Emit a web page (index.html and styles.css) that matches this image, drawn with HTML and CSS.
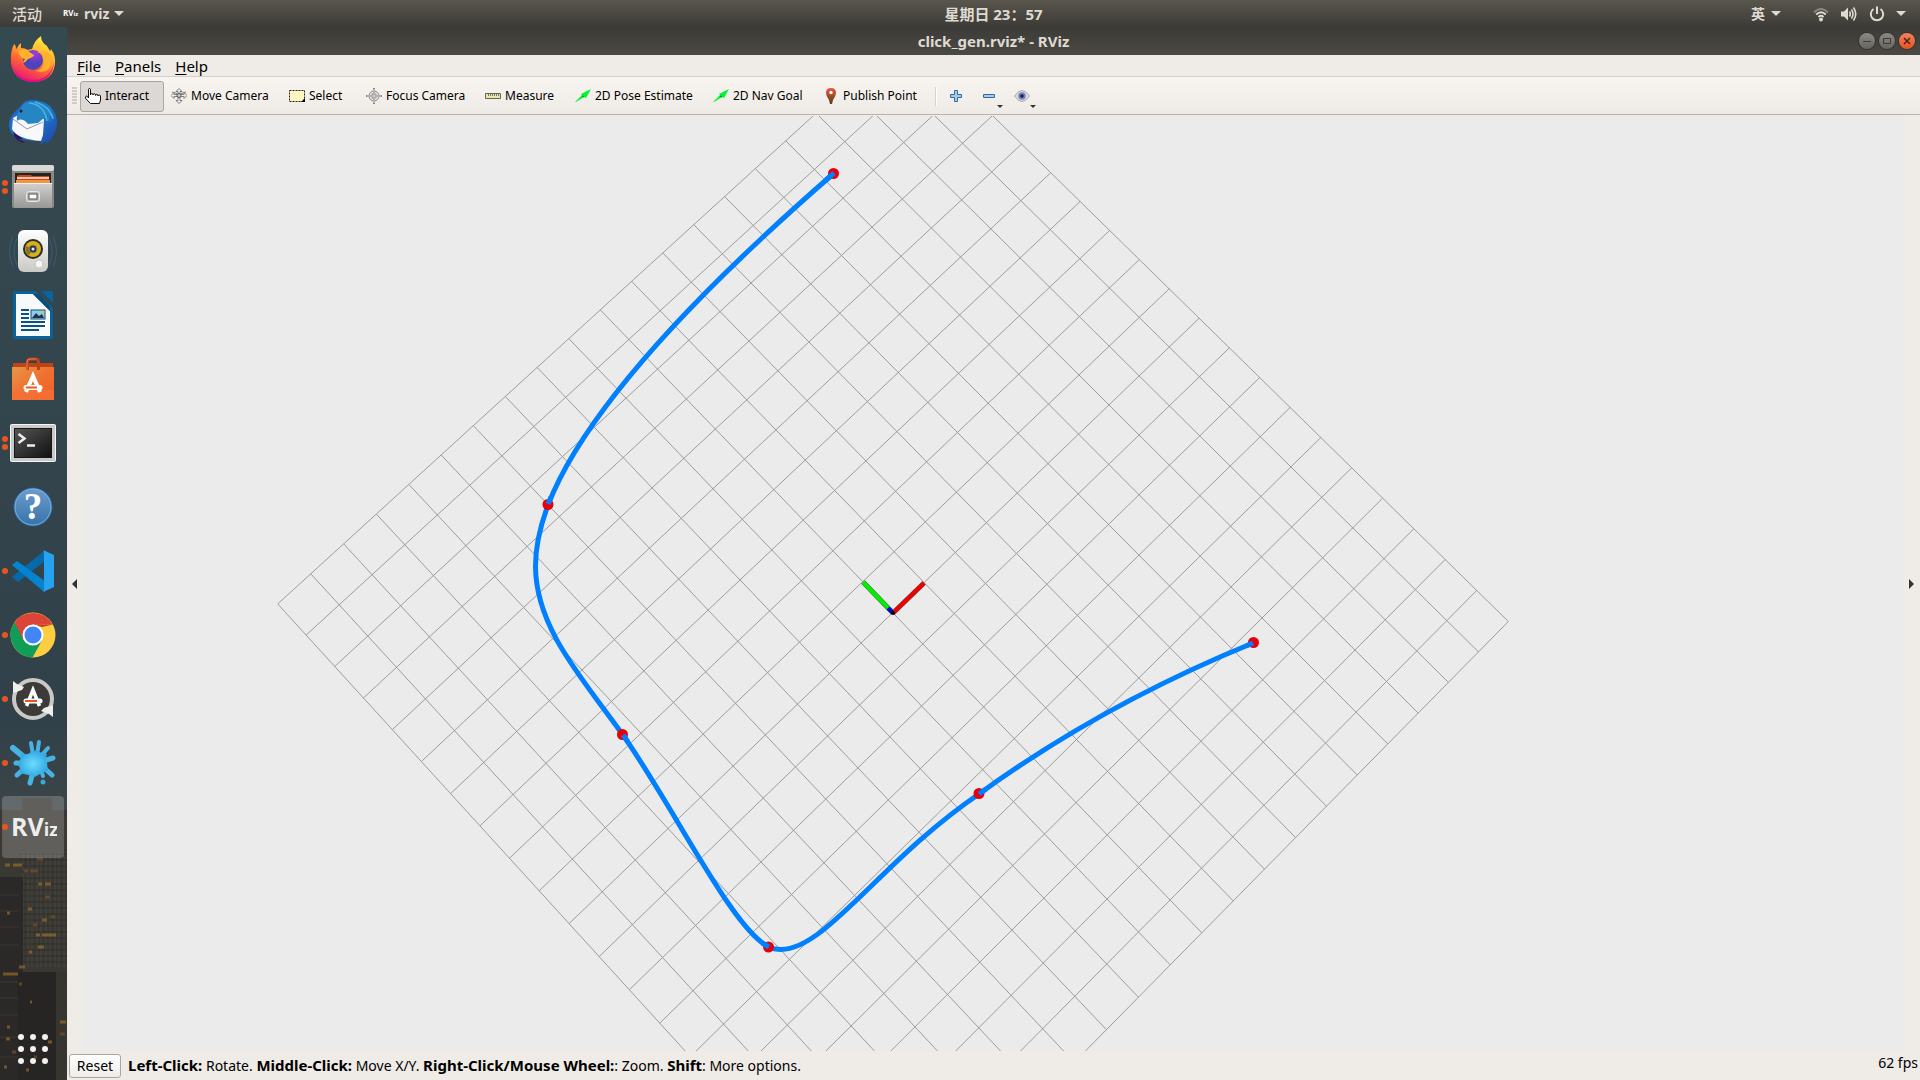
FILE: index.html
```html
<!DOCTYPE html>
<html lang="zh-CN">
<head>
<meta charset="utf-8">
<title>click_gen.rviz* - RViz</title>
<link rel="stylesheet" href="styles.css">
</head>
<body>
<header class="topbar">
  <button class="top-item" type="button">活动</button>
  <button class="top-item app-menu" type="button">
    <svg class="mini-logo" width="16" height="16" viewBox="0 0 16 16" aria-hidden="true"><text x="0" y="10" font-size="8">RV<tspan font-size="6">iz</tspan></text></svg>
    rviz <span class="caret"></span>
  </button>
  <div class="clock">星期日 23：57</div>
  <button class="top-item input-lang" type="button">英 <span class="caret"></span></button>
  <button class="top-item tray" type="button" aria-label="System">
    <svg width="16" height="16" viewBox="0 0 16 16"><g fill="none" stroke="#dfdbd2" stroke-width="1.8"><path d="M1 6.500Q8-.5 15 6.500" opacity=".4"/><path d="M3.200 8.500Q8 4 12.800 8.500"/><path d="M5.400 11Q8 8.600 10.600 11"/></g><circle cx="8" cy="13.500" r="2" fill="#dfdbd2"/></svg>
    <svg width="16" height="16" viewBox="0 0 16 16"><path d="M0 5.500h3l4-4v13l-4-4H0z" fill="#dfdbd2"/><g fill="none" stroke="#dfdbd2" stroke-width="1.600"><path d="M8.500 5.500q1.600 2.500 0 5M10.500 3.500q3 4.500 0 9M12.500 1.500q4.500 6.500 0 13"/></g></svg>
    <svg width="16" height="16" viewBox="0 0 16 16"><path d="M4.500 3A6.200 6.200 0 1 0 11.500 3M8 .5V8" fill="none" stroke="#dfdbd2" stroke-width="2"/></svg>
    <span class="caret"></span>
  </button>
</header>

<div class="desktop">
<nav class="dock" aria-label="Dock">
  <svg class="dock-wall" viewBox="0 0 67 1053" preserveAspectRatio="none" aria-hidden="true">
    <defs><linearGradient id="sky" x1="0" y1="0" x2="0" y2="1"><stop offset="0" stop-color="#354951"/><stop offset=".66" stop-color="#314149"/><stop offset=".74" stop-color="#3c4548"/><stop offset=".78" stop-color="#3c3b38"/><stop offset="1" stop-color="#2b2825"/></linearGradient>
    <pattern id="floors" width="9" height="6" patternUnits="userSpaceOnUse"><path d="M1 0v6M5 0v6" stroke="#4b4a43" stroke-width="1"/><path d="M0 5h9" stroke="#2b2a26"/></pattern></defs>
    <rect width="67" height="1053" fill="url(#sky)"/>
    <path d="M0 783h22v-12h30v12h15v270H0z" fill="#393833"/>
    <rect x="20" y="825" width="47" height="115" fill="url(#floors)" opacity=".8"/>
    <rect y="850" width="23" height="203" fill="#2b2927"/><rect x="18" y="945" width="39" height="108" fill="#262523"/>
    <rect x="56" y="945" width="11" height="108" fill="#37352f"/>
    <path d="M0 868h19M0 884h19M0 900h19M0 918h19M0 955h18M0 971h18M0 988h18M0 1010h18M0 1030h18M56 965h11M56 984h11M56 1003h11M56 1024h11" stroke="#403630"/>
    <path d="M5 838h5m3 0h9M38 857h4m3 0h6M7 886h3M28 882h4M36 908h4m2 0h14M38 920h6M29 925h3M19 940h6M3 947h15M42 893h5M60 995h6M6 1012h4M30 975h2M7 1000h3M48 1015h4M4 1040h3M26 1043h3" stroke="#a9752b" stroke-width="3" opacity=".6"/>
    <path d="M24 844h4m2 0h8M37 832h6M45 870h5M51 890h4M33 898h4M19 957h3M60 1007h5M34 1030h3M12 1025h4" stroke="#77502a" stroke-width="3" opacity=".7"/>
  </svg>
  <button class="dock-item" type="button" aria-label="Firefox"><svg width="48" height="48" viewBox="0 0 48 48">
    <defs><linearGradient id="ffx" x1=".75" y1="0" x2=".3" y2="1"><stop offset="0" stop-color="#fff14b"/><stop offset=".35" stop-color="#ffb52c"/><stop offset=".65" stop-color="#ff6036"/><stop offset="1" stop-color="#e5107e"/></linearGradient><radialGradient id="ffo" cx=".6" cy=".2"><stop offset="0" stop-color="#a436e8"/><stop offset="1" stop-color="#4f43b8"/></radialGradient></defs>
    <path d="M5 9q2 1 2 5l1-1q2-4 4-5v5q4 0 7 2 2-1 4-1 2-8 9-13 0 6 6 10l3 5q1-1 1-2 5 7 4 15Q44 46 25 47 4 46 2 28 1 17 5 9z" fill="url(#ffx)"/>
    <circle cx="24" cy="25" r="10" fill="url(#ffo)"/>
    <path d="M9 16q7-4 13 2l3 2q0 2-6 4-4 5-5 3l2-3q-5-1-7-8zM28 17q8 2 7 11-2 8-9 8 17 4 16-13-1-9-14-6z" fill="#ffb02c"/>
    <path d="M5 33q5 12 19 12 17 0 21-17-3 19-21 19Q9 47 5 33z" fill="#e30e82"/></svg></button>
  <button class="dock-item" type="button" aria-label="Thunderbird"><svg width="48" height="48" viewBox="0 0 48 48">
    <defs><linearGradient id="tb" x1="0" y1="0" x2="1" y2="1"><stop offset="0" stop-color="#1f5fc4"/><stop offset=".5" stop-color="#1b78d0"/><stop offset="1" stop-color="#2341a0"/></linearGradient></defs>
    <path d="M11 8Q15 0 24 1q20 1 24 20 1 13-10 24l-1-3-6 4 1-4Q1 43 0 26q0-9 11-18z" fill="url(#tb)"/>
    <path d="M4 19q7-5 10-2l21 3-1 16-2 6Q8 40 3 30z" fill="#f8f8fa"/>
    <path d="M4 20l14 10 16-7" fill="none" stroke="#9a9ba2"/>
    <path d="M12 9q4-8 13-6l7 2q11 5 13 15l-5-4 2 7-7-4-6 5-10 1q-6-7-11-3-1-7 4-13z" fill="#2686c4"/>
    <path d="M20 4q15 1 18 18M26 3q15 4 18 17" fill="none" stroke="#47b4e6" stroke-width="1.500"/><circle cx="12" cy="12" r="1.500" fill="#123"/>
    <path d="M4 33l10 7h-5l8 4Q6 43 4 33z" fill="#301064"/></svg></button>
  <button class="dock-item on2" type="button" aria-label="Files"><svg width="48" height="48" viewBox="0 0 48 48">
    <defs><linearGradient id="cab" x1="0" y1="0" x2="0" y2="1"><stop offset="0" stop-color="#d2d2d1"/><stop offset="1" stop-color="#979796"/></linearGradient></defs>
    <rect x="3" y="2" width="42" height="43" rx="2" fill="#898988"/><rect x="3" y="2" width="42" height="6" rx="2" fill="#d9d9d8"/>
    <rect x="6" y="10" width="36" height="10" fill="#29221e"/><path d="M8 13l2-1h12l1 1h17v7H8z" fill="#cb481c"/><path d="M8 15h32" stroke="#fff5dc" stroke-width="1.500"/><path d="M7 17h34v3H7z" fill="#f29444"/>
    <path d="M5 20h38v25H5z" fill="url(#cab)"/><path d="M5 20.500h38" stroke="#f4f4f3"/><rect x="17.500" y="28.500" width="13" height="10" rx="2" fill="#bbb" stroke="#e8e8e8"/><rect x="20" y="31" width="8" height="5" fill="#fff" stroke="#555"/></svg></button>
  <button class="dock-item" type="button" aria-label="Rhythmbox"><svg width="48" height="48" viewBox="0 0 48 48">
    <path d="M4 9q-7 15 0 31M8 11q-6 13 0 27M44 9q7 15 0 31M40 11q6 13 0 27" fill="none" stroke="#3f5a74"/>
    <defs><linearGradient id="spk" x1="0" y1="0" x2="0" y2="1"><stop offset="0" stop-color="#fff"/><stop offset="1" stop-color="#c9c9c5"/></linearGradient></defs>
    <rect x="9" y="3" width="30" height="42" rx="6" fill="url(#spk)"/><circle cx="24" cy="22" r="10" fill="#2c2b29"/><circle cx="24" cy="22" r="8" fill="#d8b116"/><path d="M24 22l-7-3q-1 7 3 9z" fill="#88700c"/><circle cx="24" cy="22" r="4" fill="#373737" stroke="#888"/><circle cx="24" cy="22" r="1.500" fill="#eee"/><circle cx="30" cy="37" r="4" fill="#f5f5f3" stroke="#c7c7c4"/><path d="M15 37h3v3h-3z" fill="none" stroke="#ccc"/></svg></button>
  <button class="dock-item" type="button" aria-label="Writer"><svg width="48" height="48" viewBox="0 0 48 48">
    <path d="M6 0h21l17 17v29q0 2-2 2H6q-2 0-2-2V2q0-2 2-2z" fill="#09629a"/><path d="M7 3h17l17 17v25H7z" fill="#f7f9fa"/><path d="M24 3l17 17-1-6L30 3z" fill="#0b4c78"/><path d="M32 0h11q1 0 1 1v11z" fill="#04659f"/>
    <path d="M12 19h8M12 23h8M12 27h8M12 31h24M12 35h24M12 39h18" stroke="#0b5380" stroke-width="2"/><rect x="22" y="19" width="14" height="9" fill="#8dcbed" stroke="#0b5380"/><path d="M23 27l4-5 3 3 3-2 2 4z" fill="#234"/><circle cx="34" cy="21" r="1.500" fill="#e0bd3c"/></svg></button>
  <button class="dock-item" type="button" aria-label="Software"><svg width="48" height="48" viewBox="0 0 48 48">
    <defs><linearGradient id="bag" x1="0" y1="0" x2="1" y2="1"><stop offset="0" stop-color="#e89549"/><stop offset=".5" stop-color="#f0712f"/><stop offset="1" stop-color="#ee5d25"/></linearGradient></defs>
    <path d="M4 8h40v5H4z" fill="#bd4319"/><path d="M3 12h42v33H3z" fill="url(#bag)"/><path d="M3 35h42v10H3z" fill="#f57238" opacity=".7"/>
    <path d="M18.500 15V7q0-3 3-3h5q3 0 3 3v8" fill="none" stroke="#c14014" stroke-width="3"/><path d="M18 15V7q0-3 3-3h6" fill="none" stroke="#ed7a4e"/>
    <path d="M17 37l7-16 7 16" fill="none" stroke="#fff" stroke-width="4"/><path d="M17 32.500h14" stroke="#fff" stroke-width="5" stroke-linecap="round"/><path d="M17 32.500h11" stroke="#e85a1e" stroke-width="2"/></svg></button>
  <button class="dock-item on2" type="button" aria-label="Terminal"><svg width="48" height="48" viewBox="0 0 48 48">
    <defs><linearGradient id="trm" x1="0" y1="0" x2="1" y2="1"><stop offset="0" stop-color="#555"/><stop offset="1" stop-color="#111"/></linearGradient></defs>
    <rect x="1.500" y="5.500" width="45" height="37" rx="1" fill="#c9c9c7" stroke="#f5f5f5"/><rect x="5" y="9" width="38" height="30" fill="#171717"/><rect x="6" y="10" width="36" height="28" fill="url(#trm)"/><path d="M9.500 15l6 4.500-6 4.500M18 26.500h8" fill="none" stroke="#eee" stroke-width="2.500"/></svg></button>
  <button class="dock-item" type="button" aria-label="Help"><svg width="48" height="48" viewBox="0 0 48 48">
    <defs><linearGradient id="hlp" x1="0" y1="0" x2="0" y2="1"><stop offset="0" stop-color="#6f9ccf"/><stop offset="1" stop-color="#3573a9"/></linearGradient></defs>
    <circle cx="24" cy="24" r="19" fill="url(#hlp)" stroke="#28639c"/><circle cx="24" cy="24" r="18" fill="none" stroke="#7daee0"/><text class="help-mark" x="24" y="36" text-anchor="middle">?</text></svg></button>
  <button class="dock-item on1" type="button" aria-label="VS Code"><svg width="48" height="48" viewBox="0 0 48 48">
    <path d="M3 30l6 5L36 14V3z" fill="#0769a9"/><path d="M3 18l5-4 28 20v11L34 44z" fill="#0683ce"/><path d="M34 3l11 5v32l-11 5q1 0 1-3V6q0-3-1-3z" fill="#26a3f0"/></svg></button>
  <button class="dock-item on1" type="button" aria-label="Chrome"><svg width="48" height="48" viewBox="0 0 48 48">
    <circle cx="24" cy="24" r="22.500" fill="#ffcd40"/><path d="M4.500 13A22.500 22.500 0 0 1 43.500 13.500H24L14 29z" fill="#db4437"/><path d="M5.500 11.500A22.500 22.500 0 0 0 23.500 46.500L33 29.500 24 34 14.500 29z" fill="#109d58"/><path d="M33 16l11-2.500H24z" fill="#c3372d"/><circle cx="24" cy="24" r="10.500" fill="#fff"/><circle cx="24" cy="24" r="8.500" fill="#4286f5"/></svg></button>
  <button class="dock-item on1" type="button" aria-label="Software Updater"><svg width="48" height="48" viewBox="0 0 48 48">
    <circle cx="24" cy="24" r="17" fill="#3d3b39"/><circle cx="24" cy="24" r="19" fill="none" stroke="#c9c9c6" stroke-width="4"/><path d="M4 18V6l4 3 7 3-2 3zM44 30v12l-4-3-8-3 3-3z" fill="#eee"/><path d="M17.500 31L24 15l6.500 16" fill="none" stroke="#fff" stroke-width="3.500"/><path d="M17 26h14" stroke="#fff" stroke-width="5" stroke-linecap="round"/><path d="M16 26h12" stroke="#e9541c" stroke-width="2"/></svg></button>
  <button class="dock-item on1" type="button" aria-label="Splash"><svg width="48" height="48" viewBox="0 0 48 48">
    <defs><radialGradient id="ink"><stop offset="0" stop-color="#6fdcff"/><stop offset="1" stop-color="#31a9e2"/></radialGradient></defs>
    <g stroke="#48b2e2" stroke-linecap="round" fill="none"><path d="M4 9l12 10" stroke-width="6"/><path d="M22 4l2 12M30 3l-2 13M39 9l-8 9" stroke-width="4"/><path d="M44 19l-10 3M43 36l-9-8" stroke-width="5"/><path d="M7 24h11" stroke-width="5"/><path d="M8 36l9-8M21 44l3-11" stroke-width="5"/><path d="M34 37l-2-6" stroke-width="4"/></g>
    <path d="M12 14q6 3 10-1 4-2 7-1 4 3 9 3-2 6 0 9l1 7-8 4-5 3-7-2-8-2q1-5-2-8 3-5 3-12z" fill="url(#ink)"/><circle cx="34" cy="43" r="2.500" fill="#34a9e0"/></svg></button>
  <button class="dock-item on1 current" type="button" aria-label="RViz"><svg class="logo" width="48" height="48" viewBox="0 0 48 48"><text x="2" y="33" font-size="25">RV<tspan font-size="18">iz</tspan></text></svg></button>
  <button class="dock-item apps" type="button" aria-label="Show Applications"><svg width="48" height="48" viewBox="0 0 48 48"><g fill="#f2f1f0"><circle cx="12" cy="12" r="3"/><circle cx="24" cy="12" r="3"/><circle cx="36" cy="12" r="3"/><circle cx="12" cy="24" r="3"/><circle cx="24" cy="24" r="3"/><circle cx="36" cy="24" r="3"/><circle cx="12" cy="36" r="3"/><circle cx="24" cy="36" r="3"/><circle cx="36" cy="36" r="3"/></g></svg></button>
</nav>

<main class="window">
  <div class="titlebar">
    <h1 class="title">click_gen.rviz* - RViz</h1>
    <div class="win-buttons">
      <button class="win-btn" type="button" aria-label="Minimize"><svg width="16" height="16" viewBox="0 0 16 16"><path d="M4 8.500h8" stroke="#3c3b37"/></svg></button>
      <button class="win-btn" type="button" aria-label="Maximize"><svg width="16" height="16" viewBox="0 0 16 16"><path d="M4.500 5.500h7v5h-7z" fill="none" stroke="#3c3b37"/></svg></button>
      <button class="win-btn close" type="button" aria-label="Close"><svg width="16" height="16" viewBox="0 0 16 16"><path d="M5 5l6 6M11 5l-6 6" stroke="#4a2313" stroke-width="1.500"/></svg></button>
    </div>
  </div>
  <nav class="menubar">
    <button type="button"><u>F</u>ile</button><button type="button"><u>P</u>anels</button><button type="button"><u>H</u>elp</button>
  </nav>
  <div class="toolbar" role="toolbar">
    <span class="grip"></span>
    <div class="tools">
      <button class="tool active" type="button"><svg width="16" height="16" viewBox="0 0 16 16"><path d="M3.500 10V1.500q0-1 1-1t1 1V7q0-1.500 1.200-1.500T8 7q0-1.300 1.300-1.300T10.600 7.500q0-1.200 1.200-1.200T13 8q0-1 1.200-1t1.300 1v4l-1 3.500h-9L.6 10.500V8.600q.5-1 1.500-.4z" fill="#fff" stroke="#111"/></svg>Interact</button>
      <button class="tool" type="button"><svg width="16" height="16" viewBox="0 0 16 16"><g fill="#f2f0ec" stroke="#666" stroke-width=".8"><path d="M8 .5l3 3H9v3h4v-2l3 3-3 3v-2H9v4h2l-3 3-3-3h2v-4H3v2l-3-3 3-3v2h4v-3H5z"/><path d="M1 4l5 1.500L8 8l2-2.500L15 4" fill="none"/></g><circle cx="8" cy="7.500" r="2" fill="#ccc" stroke="#555"/></svg>Move Camera</button>
      <button class="tool" type="button"><svg width="16" height="16" viewBox="0 0 16 16"><path d="M.5 2.500h15v11H.5z" fill="#fff6bf" stroke="#222" stroke-dasharray="2 1"/><path d="M16 10v4h-4z" fill="#000"/></svg>Select</button>
      <button class="tool" type="button"><svg width="16" height="16" viewBox="0 0 16 16"><g fill="none" stroke="#888"><circle cx="8" cy="8" r="5" fill="#e5e5e2"/><circle cx="8" cy="8" r="2.500"/><path d="M8 0v16M0 8h16" stroke-width="2"/></g><path d="M8 1v14M1 8h14" stroke="#ddd"/></svg>Focus Camera</button>
      <button class="tool" type="button"><svg width="16" height="16" viewBox="0 0 16 16"><path d="M.5 5.500h15v5H.5z" fill="#ece6a9" stroke="#66655d"/><path d="M3.500 6v2M5.500 6v2M7.500 6v2M9.500 6v2M11.500 6v2M13.500 6v2" stroke="#77756b"/></svg>Measure</button>
      <button class="tool" type="button"><svg width="16" height="16" viewBox="0 0 16 16"><path d="M0 14l7-7-1-1 10-5-5 9-2-1-8 5z" fill="#00f52f"/><path d="M7 8l2 1" stroke="#087b20"/></svg>2D Pose Estimate</button>
      <button class="tool" type="button"><svg width="16" height="16" viewBox="0 0 16 16"><path d="M0 14l7-7-1-1 10-5-5 9-2-1-8 5z" fill="#00f52f"/><path d="M7 8l2 1" stroke="#087b20"/></svg>2D Nav Goal</button>
      <button class="tool" type="button"><svg width="16" height="16" viewBox="0 0 16 16"><defs><linearGradient id="pin" x1="0" y1="0" x2="0" y2="1"><stop offset="0" stop-color="#ec5637"/><stop offset="1" stop-color="#54401c"/></linearGradient></defs><path d="M8 0q5 0 5 5 0 3-3 7l-1 4H7l-1-4Q3 8 3 5q0-5 5-5z" fill="url(#pin)"/><circle cx="8" cy="4.500" r="1.700" fill="#fff"/></svg>Publish Point</button>
    </div>
    <span class="divider"></span>
    <button class="tool icon" type="button" aria-label="Add tool"><svg width="16" height="16" viewBox="0 0 16 16"><path d="M6.500 2.500h3v4h4v3h-4v4h-3v-4h-4v-3h4z" fill="#a9c8ea" stroke="#3768a5"/></svg></button>
    <button class="tool icon drop" type="button" aria-label="Remove tool"><svg width="16" height="16" viewBox="0 0 16 16"><path d="M2.500 6.500h11v3h-11z" fill="#a9c8ea" stroke="#3768a5"/></svg></button>
    <button class="tool icon drop" type="button" aria-label="Tool visibility"><svg width="16" height="16" viewBox="0 0 16 16"><path d="M.5 8Q8-3 15.500 8 8 19 .5 8z" fill="#dededc" stroke="#a9a9a6"/><circle cx="8" cy="8" r="3.800" fill="#6f83c8"/><circle cx="8" cy="8" r="1.800" fill="#1d1f3d"/></svg></button>
  </div>

  <div class="workspace">
    <button class="side left" type="button" aria-label="Left panel"></button>
    <svg class="view" viewBox="83 116 1821 935" aria-label="3D view">
      <g id="grid" class="grid"></g>
      <path class="axis-edge" d="M893 613L924 583M893 613L863 582"/>
      <path class="axis-x" d="M893 613L924 583"/><path class="axis-y" d="M892 612L863 582"/><path class="axis-z" d="M892 612L888 608"/><circle cx="893" cy="613" r="2"/>
      <path class="trajectory" d="M833 174C717 275 588 402 548 505C541 524 535.500 545 535.500 566C535.500 628 583 679 623 735C676 811 733 930 769 947C773 949 777 949.500 781 949.500C826 949.500 883 859 979 794C1063 733 1160 681 1253 643"/>
      <g class="waypoints"><circle cx="833.500" cy="173.500" r="5.500"/><circle cx="548" cy="504.500" r="5.500"/><circle cx="622.500" cy="734.500" r="5.500"/><circle cx="768.500" cy="947" r="5.500"/><circle cx="979" cy="793.500" r="5.500"/><circle cx="1253.500" cy="642.500" r="5.500"/></g>
      <path class="trajectory" d="M834 173L826 180M548 504L551 497M623 735L628 742M769 947L762 943M979 794L986 789M1253 643L1246 646"/>
    </svg>
    <button class="side right" type="button" aria-label="Right panel"></button>
  </div>

  <footer class="status">
    <button class="reset" type="button">Reset</button>
    <p class="hint"><b>Left-Click:</b> Rotate. <b>Middle-Click:</b> Move X/Y. <b>Right-Click/Mouse Wheel:</b>: Zoom. <b>Shift</b>: More options.</p>
    <span class="fps">62 fps</span>
  </footer>
</main>
</div>
<script src="grid.js"></script>
</body>
</html>
```
FILE: styles.css
```css
* { box-sizing: border-box; }
body {
  margin: 0;
  height: 100vh;
  display: flex;
  flex-direction: column;
  overflow: hidden;
  font: 12px/16px "Noto Sans", "Noto Sans CJK SC", sans-serif;
  color: #000;
  background: #efebe7;
}
button {
  margin: 0;
  padding: 0;
  border: 0;
  background: none;
  font: inherit;
  color: inherit;
}
svg { display: block; flex: none; }

.topbar {
  flex: none;
  height: 27px;
  display: flex;
  align-items: center;
  position: relative;
  padding: 0 14px 0 12px;
  background: linear-gradient(#59564e, #3d3b37);
  color: #dfdbd2;
  font-size: 15px;
  line-height: 24px;
}
.top-item { display: flex; align-items: center; gap: 5px; font-weight: 500; }
.app-menu { margin-left: 21px; font-weight: 700; font-size: 14px; }
.mini-logo text { font-family: "Open Sans", sans-serif; font-weight: 700; fill: #fff; }
.caret {
  border: 5px solid transparent;
  border-top-color: #dfdbd2;
  border-bottom: 0;
}
.clock {
  position: absolute;
  left: 67px;
  right: 0;
  text-align: center;
  font-weight: 700;
  pointer-events: none;
}
.input-lang { margin-left: auto; font-weight: 700; gap: 6px; font-size: 14px; }
.tray { gap: 12px; margin-left: 32px; }
.tray .caret { margin-left: -1px; }

.desktop { flex: 1; min-height: 0; display: flex; }
.dock {
  position: relative;
  width: 67px;
  flex: none;
  display: flex;
  flex-direction: column;
  align-items: flex-start;
  gap: 2px;
  padding: 1px 0 0 2px;
}
.dock-wall { position: absolute; inset: 0; width: 100%; height: 100%; }
.dock-item {
  position: relative;
  width: 62px;
  height: 62px;
  flex: none;
  display: flex;
  align-items: center;
  justify-content: center;
  border-radius: 4px;
}
.current { background: rgba(255, 255, 255, .2); }
.apps { margin-top: auto; }
.on1::before, .on2::before, .on2::after {
  content: "";
  position: absolute;
  left: 0;
  top: 28px;
  width: 6px;
  height: 6px;
  border-radius: 50%;
  background: #e95420;
}
.on2::before { top: 24px; }
.on2::after { top: 32px; }
.help-mark { font: 700 37px "Liberation Serif", serif; fill: #fff; }
.logo text { font-family: "Open Sans", sans-serif; font-weight: 700; fill: #eee; }

.window { flex: 1; min-width: 0; display: flex; flex-direction: column; }
.titlebar {
  flex: none;
  height: 28px;
  display: flex;
  align-items: center;
  position: relative;
  background: linear-gradient(#3c3b37, #4b4943);
}
.title {
  flex: 1;
  margin: 0;
  text-align: center;
  font-size: 15px;
  line-height: 24px;
  color: #dfdbd2;
}
.win-buttons { position: absolute; right: 5px; display: flex; gap: 4px; }
.win-btn {
  border-radius: 50%;
  background: linear-gradient(#8c8a83, #66645e);
  box-shadow: 0 0 0 1px #33322e;
}
.close { background: linear-gradient(#f48361, #e8521c); }

.menubar {
  flex: none;
  height: 22px;
  display: flex;
  align-items: center;
  gap: 14px;
  padding-left: 10px;
  border-bottom: 1px solid #d3cfca;
  font-size: 15px;
  line-height: 20px;
}
.menubar u { text-underline-offset: 2px; text-decoration-thickness: 1px; }

.toolbar {
  flex: none;
  height: 38px;
  display: flex;
  align-items: center;
  padding: 1px 0 0 5px;
  background: linear-gradient(#f8f5f1, #eeebe6);
  border-bottom: 1px solid #b7b3ae;
}
.grip {
  width: 5px;
  height: 18px;
  margin-right: 3px;
  background: radial-gradient(circle at 1px 1px, #cfcbc6 1px, transparent 1px) 0 0 / 2px 3px;
}
.tools {
  display: grid;
  grid-template-columns: 84px 116px 75px 117px 88px 136px 108px 112px;
  gap: 2px;
}
.tool {
  height: 31px;
  display: flex;
  align-items: center;
  gap: 4px;
  padding: 0 4px;
  border: 1px solid transparent;
  border-radius: 3px;
  white-space: nowrap;
}
.active { background: #dcd8d5; border-color: #aaa6a2; }
.divider { width: 2px; height: 19px; margin: 0 6px 0 5px; background: #d6d2cd; border-right: 1px solid #fff; }
.icon { position: relative; width: 33px; }
.drop::after {
  content: "";
  position: absolute;
  left: 20px;
  bottom: 3px;
  border: 3px solid transparent;
  border-top-color: #333;
  border-bottom: 0;
}

.workspace { flex: 1; min-height: 0; display: flex; padding-top: 1px; }
.side { width: 16px; flex: none; display: flex; align-items: center; justify-content: center; padding-right: 2px; background: #efebe7; }
.side::before { content: ""; border: 5px solid transparent; }
.left::before { border-right-color: #333; border-left: 0; }
.right::before { border-left-color: #333; border-right: 0; }
.view { flex: 1; min-width: 0; height: 100%; background: #ebebeb; }
.grid { stroke: #9c9c9e; stroke-width: 1; }
.waypoints { fill: #e80008; }
.trajectory { fill: none; stroke: #0080ff; stroke-width: 5; }
.axis-edge { fill: none; stroke: #4c5a4c; stroke-width: 5; }
.axis-x { stroke: #f00000; stroke-width: 4; }
.axis-y { stroke: #00f000; stroke-width: 4; }
.axis-z { stroke: #0000e0; stroke-width: 4; }

.status {
  flex: none;
  height: 29px;
  display: flex;
  align-items: center;
  gap: 7px;
  padding: 0 2px;
  font-size: 14px;
  line-height: 20px;
}
.reset {
  width: 52px;
  height: 24px;
  border: 1px solid #aaa6a1;
  border-radius: 3px;
  background: linear-gradient(#fff, #eeece9);
}
.hint { margin: 0; }
.hint b { font-size: 15px; }
.fps { margin-left: auto; padding-bottom: 6px; }
```
FILE: grid.js
```js
// Ground plane: 20 x 20 cells of 1 m, seen by the orbit camera.
const HALF = 10;

function project(x, y) {
  const w = 1 + 0.00272 * x + 0.00278 * y;
  return [
    (33.91 * x - 27.57 * y + 892.7) / w,
    (-28.58 * x - 29.42 * y + 612.7) / w,
  ];
}

function addLine(parent, from, to) {
  const line = document.createElementNS("http://www.w3.org/2000/svg", "line");
  line.setAttribute("x1", from[0]);
  line.setAttribute("y1", from[1]);
  line.setAttribute("x2", to[0]);
  line.setAttribute("y2", to[1]);
  parent.appendChild(line);
}

const grid = document.getElementById("grid");
for (let i = -HALF; i <= HALF; i++) {
  addLine(grid, project(i, -HALF), project(i, HALF));
  addLine(grid, project(-HALF, i), project(HALF, i));
}
```
